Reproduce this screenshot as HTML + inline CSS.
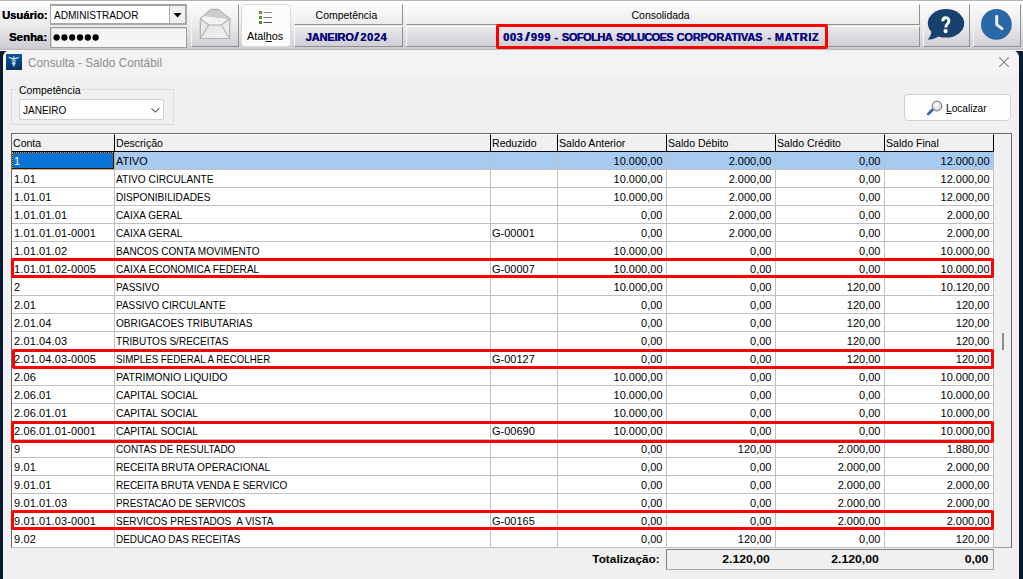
<!DOCTYPE html>
<html>
<head>
<meta charset="utf-8">
<style>
*{box-sizing:border-box;margin:0;padding:0}
html,body{width:1023px;height:579px;overflow:hidden}
body{position:relative;background:#081b33;font-family:"Liberation Sans",sans-serif;font-size:11px;color:#000}
.abs{position:absolute}
.sx{display:inline-block;transform-origin:0 50%;white-space:nowrap}
.sxr{display:inline-block;transform-origin:100% 50%;white-space:nowrap}
.sxc{display:inline-block;transform-origin:50% 50%;white-space:nowrap}
#toolbar{left:0;top:0;width:1023px;height:50px;background:linear-gradient(#fefefe 1px,#f4f4f5 13px,#eae9eb 25px,#dddbdf 36px,#cfccd2 47px,#bcb9bf 48.500px,#a6a3a8 49px,#a6a3a8 50px);border-top:1px solid #b4b4b4}
#wline{left:0;top:50px;width:1023px;height:1px;background:#fbfbfb}
.lbl{font-weight:bold;font-size:11px;white-space:nowrap;line-height:13px;text-shadow:.25px 0 0 #000}
.inp{border:1px solid #9c9c9c;background:#fff;box-shadow:inset 1px 1px 0 #d9d9d9;white-space:nowrap;overflow:hidden}
.tbtn{border:1px solid #f6f5f7;border-right-color:#918f94;border-bottom-color:#918f94;background:transparent}
.cell{border:1px solid #ebe9ed;border-right-color:#a09ea4;border-bottom-color:#a09ea4;text-align:center;white-space:nowrap;font-size:11px;line-height:20px;background:transparent;border-color:#fbfbfb #918f94 #918f94 #fbfbfb}
.cell.b{font-weight:bold;color:#080880}
.bw{position:absolute;left:0;top:27px;height:20px;line-height:20px;font-weight:bold;font-size:11px;color:#080880;z-index:3}
.bw span{position:absolute;top:0;white-space:pre;text-shadow:.3px 0 0 #080880}
.bw span.sl2{transform:scale(1.9,1.12);transform-origin:50% 62%;text-shadow:none}
.bu{letter-spacing:-.38px;word-spacing:.8px}
.bd{letter-spacing:.62px}
.sl{margin:0 2.5px 0 1.9px}
.ds{letter-spacing:.6px;white-space:pre}
#win{left:3px;top:50px;width:1016px;height:530px;background:#f0f0f0;border-top-left-radius:8px;border-top-right-radius:8px}
#tbar{left:3px;top:50px;width:1016px;height:25px;background:#f3f3f3;border-top-left-radius:8px;border-top-right-radius:8px}
#title{left:28px;top:55px;font-size:13px;line-height:15px;color:#8e8e8e;white-space:nowrap}
#grid{left:11px;top:133px;width:1001px;height:415px;background:#f0f0f0;border:1px solid #696969;border-bottom-color:#a0a0a0}
table{border-collapse:separate;border-spacing:0;table-layout:fixed;position:absolute;left:12px;top:134px;width:982px;font-size:11px}
th{height:18px;font-weight:normal;text-align:left;padding:1px 0 0 1px;background:#f0f0f0;border-right:1px solid #000;border-bottom:1px solid #000;border-top:1px solid #fff;white-space:nowrap;overflow:hidden;line-height:15px}
th span{display:inline-block;transform:scaleX(.96);transform-origin:0 50%}
td{height:18px;padding:1px 0 0 1px;background:#fff;border-right:1px solid #c0c0c0;border-bottom:1px solid #c0c0c0;white-space:pre;overflow:hidden;line-height:16px}
td.r{text-align:right;padding:1px 3.500px 0 0}
td.c1{padding-left:2px}
tr.sel td{background:#a6caf0}
tr.sel td.first{background:#0875d6;color:#fff;box-shadow:inset 0 0 0 1px #20160a;outline:1px dotted #f09a30;outline-offset:-1px}
span.u{display:inline-block;transform:scaleX(.91);transform-origin:0 50%}
span.k{letter-spacing:.13px}
.red{position:absolute;border:3px solid #ff0000;border-radius:2px}
.tot{position:absolute;top:550px;height:20px;font-weight:bold;font-size:11px;text-align:right;line-height:19px;white-space:nowrap}
</style>
</head>
<body>
<div id="toolbar" class="abs"></div><div id="wline" class="abs"></div>

<!-- login -->
<div class="abs lbl" style="left:2px;top:9px"><span class="sx" style="transform:scaleX(1.02)">Usuário:</span></div>
<div class="abs lbl" style="left:9px;top:31px"><span class="sx" style="transform:scaleX(1.035)">Senha:</span></div>
<div class="abs" style="left:50px;top:4px;width:137px;height:21px;border:2px solid #a9a9a9;border-left-width:1px;border-top-color:#a2a2a2;background:#fff"></div>
<div class="abs" style="left:54px;top:9px;font-size:11px;line-height:13px;white-space:nowrap"><span class="u" style="transform:scaleX(.915)">ADMINISTRADOR</span></div>
<div class="abs" style="left:169px;top:6px;width:16px;height:17px;border-left:1px solid #a9a9a9;background:#f0f0f0"></div>
<svg class="abs" style="left:172px;top:11px" width="12" height="8" viewBox="172 11 12 8"><path d="M173.500 13h8l-4 4.500z" fill="#000"/></svg>
<div class="abs inp" style="left:50px;top:27px;width:137px;height:21px;background:#f5f5f5"></div>
<svg class="abs" style="left:52px;top:32px" width="50" height="12"><g fill="#000"><circle cx="4.600" cy="5.500" r="3.150"/><circle cx="12.400" cy="5.500" r="3.150"/><circle cx="20.200" cy="5.500" r="3.150"/><circle cx="28" cy="5.500" r="3.150"/><circle cx="35.800" cy="5.500" r="3.150"/><circle cx="43.600" cy="5.500" r="3.150"/></g></svg>

<!-- mail button -->
<div class="abs tbtn" style="left:191px;top:4px;width:48px;height:43px"></div>
<svg class="abs" style="left:191px;top:3px" width="48" height="44" viewBox="191 3 48 44"><defs><linearGradient id="eg" x1="0" y1="0" x2="1" y2="1"><stop offset="0" stop-color="#e4e4e4"/><stop offset="1" stop-color="#efefef"/></linearGradient></defs><path d="M200.300 18.800 L211 9.300 H218 L229.700 18.800 V38.500 H200.300 Z" fill="url(#eg)" stroke="#b0b0b0" stroke-width="1.200" stroke-linejoin="round"/><path d="M203.500 16.300 L211.200 10 H217.800 L228.600 19.200 Z" fill="#cbcbcb"/><path d="M201.200 18.700 L203.500 16.300 L228.600 19.200 L221.300 24.600 H208.700 Z" fill="#f2f2f2"/><path d="M200.300 18.800 L208.700 25 H221.300 L229.700 18.800 M200.300 38.500 L208.700 25 M229.700 38.500 L221.300 25" fill="none" stroke="#b0b0b0" stroke-width="1.100"/></svg>

<!-- atalhos -->
<div class="abs" style="left:241px;top:4px;width:50px;height:43px;border:1px solid #d9d9d9;border-radius:4px;background:#fbfbfb"></div>
<svg class="abs" style="left:258px;top:10px" width="16" height="16"><g fill="#5c8424"><rect x="1" y="1" width="3" height="3"/><rect x="1" y="6" width="3" height="3"/><rect x="1" y="11" width="3" height="3"/></g><g fill="#a4c46c"><rect x="2" y="2" width="1" height="1"/><rect x="2" y="7" width="1" height="1"/></g><g><rect x="5.500" y="2" width="8.500" height="1" fill="#8a8a8a"/><rect x="5.500" y="7" width="8.500" height="1" fill="#7a7a7a"/><rect x="5.500" y="12" width="8.500" height="1" fill="#505050"/></g></svg>
<div class="abs" style="left:247px;top:30px;font-size:11px;line-height:13px;white-space:nowrap"><span class="sx" style="transform:scaleX(.985)">Atal<u>h</u>os</span></div>

<!-- competencia / consolidada -->
<div class="abs cell" style="left:294px;top:4px;width:109px;height:21px;padding-right:4px"><span class="sxc" style="transform:scaleX(.95)">Competência</span></div>
<div class="abs cell b" style="left:294px;top:26px;width:109px;height:21px"></div>
<div class="abs cell" style="left:406px;top:4px;width:514px;height:21px;padding-right:5px"><span class="sxc" style="transform:scaleX(.95)">Consolidada</span></div>
<div class="abs cell b" style="left:406px;top:26px;width:514px;height:21px"></div>
<div class="bw"><span style="left:305.6px;letter-spacing:-0.13px">JANEIRO</span><span class="sl2" style="left:355.4px">/</span><span style="left:360.2px;letter-spacing:0.62px">2024</span><span style="left:503.1px;letter-spacing:0.62px">003</span><span class="sl2" style="left:526.0px">/</span><span style="left:530.8px;letter-spacing:0.62px">999</span><span style="left:554.3px;letter-spacing:0px">-</span><span style="left:561.8px;letter-spacing:-0.49px">SOFOLHA</span><span style="left:616.0px;letter-spacing:-0.59px">SOLUCOES</span><span style="left:676.4px;letter-spacing:-0.09px">CORPORATIVAS</span><span style="left:767.3px;letter-spacing:0px">-</span><span style="left:774.8px;letter-spacing:0.6px">MATRIZ</span></div>
<div class="red" style="left:496px;top:24px;width:332px;height:25px"></div>

<!-- help / clock -->
<div class="abs tbtn" style="left:923px;top:4px;width:47px;height:43px"></div>
<svg class="abs" style="left:923px;top:3px" width="47" height="44" viewBox="923 3 47 44"><ellipse cx="946" cy="23.300" rx="18.200" ry="14.300" fill="#16426d"/><path d="M931.500 30 C931.500 34 930 37.500 927.600 39.600 C932 39.600 936 38.500 939 36 Z" fill="#16426d"/><path d="M942.800 21.200 C942.800 16.700 948.900 16.700 948.900 20.800 C948.900 23.800 945.700 24 945.700 27.600" fill="none" stroke="#fff" stroke-width="2.900"/><circle cx="945.600" cy="31.100" r="2.100" fill="#fff"/></svg>
<div class="abs tbtn" style="left:973px;top:4px;width:48px;height:43px"></div>
<svg class="abs" style="left:973px;top:3px" width="48" height="44" viewBox="973 3 48 44"><circle cx="996.400" cy="24.400" r="15.400" fill="#2968a7"/><path d="M996.700 16.500V24.600L1002 28.600" fill="none" stroke="#f0f4f9" stroke-width="2.900" stroke-linecap="round" stroke-linejoin="round"/></svg>

<!-- window -->
<div id="win" class="abs"></div>
<div id="tbar" class="abs"></div>
<svg class="abs" style="left:5px;top:53px" width="18" height="18" viewBox="-1 -1 18 18"><defs><linearGradient id="ig" x1="0" y1="0" x2="0" y2="1"><stop offset="0" stop-color="#0b559c"/><stop offset="1" stop-color="#033264"/></linearGradient></defs><rect x="-.5" y="-.5" width="17" height="17" fill="#fafafa"/><rect width="16" height="16" fill="url(#ig)"/><g fill="#e4edf6"><path d="M2.100 2.700 L6.900 4.100 L7.800 3.300 L8.700 4.100 L13.500 2.700 L12.600 3.900 L9 5.500 L6.600 5.500 L3 3.900 Z" opacity=".95"/><circle cx="7.800" cy="2.800" r=".8" opacity=".55"/><rect x="7.200" y="3" width="1.200" height="3.500" opacity=".5"/><ellipse cx="7.800" cy="7" rx="2.700" ry=".9" opacity=".55"/><ellipse cx="7.800" cy="9.300" rx="1.900" ry="1.500" opacity=".8"/><path d="M6.300 10.300 H9.300 L7.800 13.200 Z" opacity=".75"/></g></svg>
<div id="title" class="abs"><span class="sx" style="transform:scaleX(.909)">Consulta - Saldo Contábil</span></div>
<svg class="abs" style="left:998px;top:56px" width="13" height="13"><path d="M1.300 1.300L10.800 10.800M10.800 1.300L1.300 10.800" stroke="#868686" stroke-width="1.100" fill="none"/></svg>

<!-- group box -->
<div class="abs" style="left:11px;top:89px;width:163px;height:36px;border:1px solid #dcdcdc"></div>
<div class="abs" style="left:17px;top:84px;width:64px;padding:0 2px;background:#f0f0f0;font-size:11px;line-height:13px;white-space:nowrap"><span class="sx" style="transform:scaleX(.949)">Competência</span></div>
<div class="abs" style="left:19px;top:99px;width:145px;height:21px;border:1px solid #d2d2d2;border-radius:2px;background:#fff"></div>
<div class="abs" style="left:23px;top:104px;font-size:11px;line-height:13px"><span class="u">JANEIRO</span></div>
<svg class="abs" style="left:149px;top:106px" width="12" height="8"><path d="M2.400 2.300L6.300 6.100L10.200 2.300" stroke="#505050" stroke-width="1.100" fill="none"/></svg>

<!-- localizar -->
<div class="abs" style="left:904px;top:94px;width:107px;height:27px;border:1px solid #d0d0d0;border-radius:4px;background:#fdfdfd"></div>
<svg class="abs" style="left:925px;top:98px" width="20" height="20" viewBox="925 98 20 20"><defs><radialGradient id="lg" cx=".4" cy=".35" r=".7"><stop offset="0" stop-color="#ffffff"/><stop offset="1" stop-color="#c9ccd0"/></radialGradient></defs><path d="M932.500 109.800L928.300 114" stroke="#2f62c4" stroke-width="2.800" stroke-linecap="round"/><circle cx="937" cy="106" r="4.800" fill="url(#lg)" stroke="#8c8c8c" stroke-width="1.200"/></svg>
<div class="abs" style="left:946px;top:102px;font-size:11px;line-height:13px;white-space:nowrap"><span class="sx" style="transform:scaleX(.92)"><u>L</u>ocalizar</span></div>

<!-- grid -->
<div id="grid" class="abs"></div>
<table>
<colgroup><col style="width:103px"><col style="width:376px"><col style="width:67px"><col style="width:109px"><col style="width:109px"><col style="width:109px"><col style="width:109px"></colgroup>
<tr><th><span>Conta</span></th><th><span>Descrição</span></th><th><span>Reduzido</span></th><th><span>Saldo Anterior</span></th><th><span>Saldo Débito</span></th><th><span>Saldo Crédito</span></th><th><span>Saldo Final</span></th></tr>
<tr class="sel"><td class="c1 first"><span class="k">1</span></td><td><span class="u" style="transform:scaleX(0.9845)">ATIVO</span></td><td><span class="g"></span></td><td class="r">10.000,00</td><td class="r">2.000,00</td><td class="r">0,00</td><td class="r">12.000,00</td></tr>
<tr><td class="c1"><span class="k">1.01</span></td><td><span class="u" style="transform:scaleX(0.9242)">ATIVO CIRCULANTE</span></td><td><span class="g"></span></td><td class="r">10.000,00</td><td class="r">2.000,00</td><td class="r">0,00</td><td class="r">12.000,00</td></tr>
<tr><td class="c1"><span class="k">1.01.01</span></td><td><span class="u" style="transform:scaleX(0.9197)">DISPONIBILIDADES</span></td><td><span class="g"></span></td><td class="r">10.000,00</td><td class="r">2.000,00</td><td class="r">0,00</td><td class="r">12.000,00</td></tr>
<tr><td class="c1"><span class="k">1.01.01.01</span></td><td><span class="u" style="transform:scaleX(0.91)">CAIXA GERAL</span></td><td><span class="g"></span></td><td class="r">0,00</td><td class="r">2.000,00</td><td class="r">0,00</td><td class="r">2.000,00</td></tr>
<tr><td class="c1"><span class="k">1.01.01.01-0001</span></td><td><span class="u" style="transform:scaleX(0.91)">CAIXA GERAL</span></td><td><span class="g">G-00001</span></td><td class="r">0,00</td><td class="r">2.000,00</td><td class="r">0,00</td><td class="r">2.000,00</td></tr>
<tr><td class="c1"><span class="k">1.01.01.02</span></td><td><span class="u" style="transform:scaleX(0.9132)">BANCOS CONTA MOVIMENTO</span></td><td><span class="g"></span></td><td class="r">10.000,00</td><td class="r">0,00</td><td class="r">0,00</td><td class="r">10.000,00</td></tr>
<tr><td class="c1"><span class="k">1.01.01.02-0005</span></td><td><span class="u" style="transform:scaleX(0.9151)">CAIXA ECONOMICA FEDERAL</span></td><td><span class="g">G-00007</span></td><td class="r">10.000,00</td><td class="r">0,00</td><td class="r">0,00</td><td class="r">10.000,00</td></tr>
<tr><td class="c1"><span class="k">2</span></td><td><span class="u" style="transform:scaleX(0.9121)">PASSIVO</span></td><td><span class="g"></span></td><td class="r">10.000,00</td><td class="r">0,00</td><td class="r">120,00</td><td class="r">10.120,00</td></tr>
<tr><td class="c1"><span class="k">2.01</span></td><td><span class="u" style="transform:scaleX(0.9067)">PASSIVO CIRCULANTE</span></td><td><span class="g"></span></td><td class="r">0,00</td><td class="r">0,00</td><td class="r">120,00</td><td class="r">120,00</td></tr>
<tr><td class="c1"><span class="k">2.01.04</span></td><td><span class="u" style="transform:scaleX(0.9181)">OBRIGACOES TRIBUTARIAS</span></td><td><span class="g"></span></td><td class="r">0,00</td><td class="r">0,00</td><td class="r">120,00</td><td class="r">120,00</td></tr>
<tr><td class="c1"><span class="k">2.01.04.03</span></td><td><span class="u" style="transform:scaleX(0.9133)">TRIBUTOS S/RECEITAS</span></td><td><span class="g"></span></td><td class="r">0,00</td><td class="r">0,00</td><td class="r">120,00</td><td class="r">120,00</td></tr>
<tr><td class="c1"><span class="k">2.01.04.03-0005</span></td><td><span class="u" style="transform:scaleX(0.8842)">SIMPLES FEDERAL A RECOLHER</span></td><td><span class="g">G-00127</span></td><td class="r">0,00</td><td class="r">0,00</td><td class="r">120,00</td><td class="r">120,00</td></tr>
<tr><td class="c1"><span class="k">2.06</span></td><td><span class="u" style="transform:scaleX(0.9581)">PATRIMONIO LIQUIDO</span></td><td><span class="g"></span></td><td class="r">10.000,00</td><td class="r">0,00</td><td class="r">0,00</td><td class="r">10.000,00</td></tr>
<tr><td class="c1"><span class="k">2.06.01</span></td><td><span class="u" style="transform:scaleX(0.9316)">CAPITAL SOCIAL</span></td><td><span class="g"></span></td><td class="r">10.000,00</td><td class="r">0,00</td><td class="r">0,00</td><td class="r">10.000,00</td></tr>
<tr><td class="c1"><span class="k">2.06.01.01</span></td><td><span class="u" style="transform:scaleX(0.9316)">CAPITAL SOCIAL</span></td><td><span class="g"></span></td><td class="r">10.000,00</td><td class="r">0,00</td><td class="r">0,00</td><td class="r">10.000,00</td></tr>
<tr><td class="c1"><span class="k">2.06.01.01-0001</span></td><td><span class="u" style="transform:scaleX(0.9316)">CAPITAL SOCIAL</span></td><td><span class="g">G-00690</span></td><td class="r">10.000,00</td><td class="r">0,00</td><td class="r">0,00</td><td class="r">10.000,00</td></tr>
<tr><td class="c1"><span class="k">9</span></td><td><span class="u" style="transform:scaleX(0.9039)">CONTAS DE RESULTADO</span></td><td><span class="g"></span></td><td class="r">0,00</td><td class="r">120,00</td><td class="r">2.000,00</td><td class="r">1.880,00</td></tr>
<tr><td class="c1"><span class="k">9.01</span></td><td><span class="u" style="transform:scaleX(0.9195)">RECEITA BRUTA OPERACIONAL</span></td><td><span class="g"></span></td><td class="r">0,00</td><td class="r">0,00</td><td class="r">2.000,00</td><td class="r">2.000,00</td></tr>
<tr><td class="c1"><span class="k">9.01.01</span></td><td><span class="u" style="transform:scaleX(0.9095)">RECEITA BRUTA VENDA E SERVICO</span></td><td><span class="g"></span></td><td class="r">0,00</td><td class="r">0,00</td><td class="r">2.000,00</td><td class="r">2.000,00</td></tr>
<tr><td class="c1"><span class="k">9.01.01.03</span></td><td><span class="u" style="transform:scaleX(0.8921)">PRESTACAO DE SERVICOS</span></td><td><span class="g"></span></td><td class="r">0,00</td><td class="r">0,00</td><td class="r">2.000,00</td><td class="r">2.000,00</td></tr>
<tr><td class="c1"><span class="k">9.01.01.03-0001</span></td><td><span class="u" style="transform:scaleX(0.9094)">SERVICOS PRESTADOS  A VISTA</span></td><td><span class="g">G-00165</span></td><td class="r">0,00</td><td class="r">0,00</td><td class="r">2.000,00</td><td class="r">2.000,00</td></tr>
<tr><td class="c1"><span class="k">9.02</span></td><td><span class="u" style="transform:scaleX(0.902)">DEDUCAO DAS RECEITAS</span></td><td><span class="g"></span></td><td class="r">0,00</td><td class="r">120,00</td><td class="r">0,00</td><td class="r">120,00</td></tr>
</table>
<div class="abs" style="left:1002px;top:333px;width:2px;height:17px;background:#8c8c8c"></div>

<div class="red" style="left:11px;top:258px;width:983px;height:20px"></div>
<div class="red" style="left:12px;top:349px;width:982px;height:20px"></div>
<div class="red" style="left:11px;top:421px;width:983px;height:22px"></div>
<div class="red" style="left:11px;top:510px;width:983px;height:20px"></div>

<!-- totals -->
<div class="tot" style="left:560px;width:100px"><span class="sxr" style="transform:scaleX(1.075)">Totalização:</span></div>
<div class="abs" style="left:666px;top:549px;width:328px;height:21px;border:1px solid #828282;border-right-color:#a0a0a0;border-bottom-color:#a8a8a8;background:#f0f0f0"></div>
<div class="tot" style="left:666px;width:104px"><span class="sxr" style="transform:scaleX(1.11)">2.120,00</span></div>
<div class="tot" style="left:775px;width:104px"><span class="sxr" style="transform:scaleX(1.11)">2.120,00</span></div>
<div class="tot" style="left:884px;width:104px"><span class="sxr" style="transform:scaleX(1.11)">0,00</span></div>
</body>
</html>
